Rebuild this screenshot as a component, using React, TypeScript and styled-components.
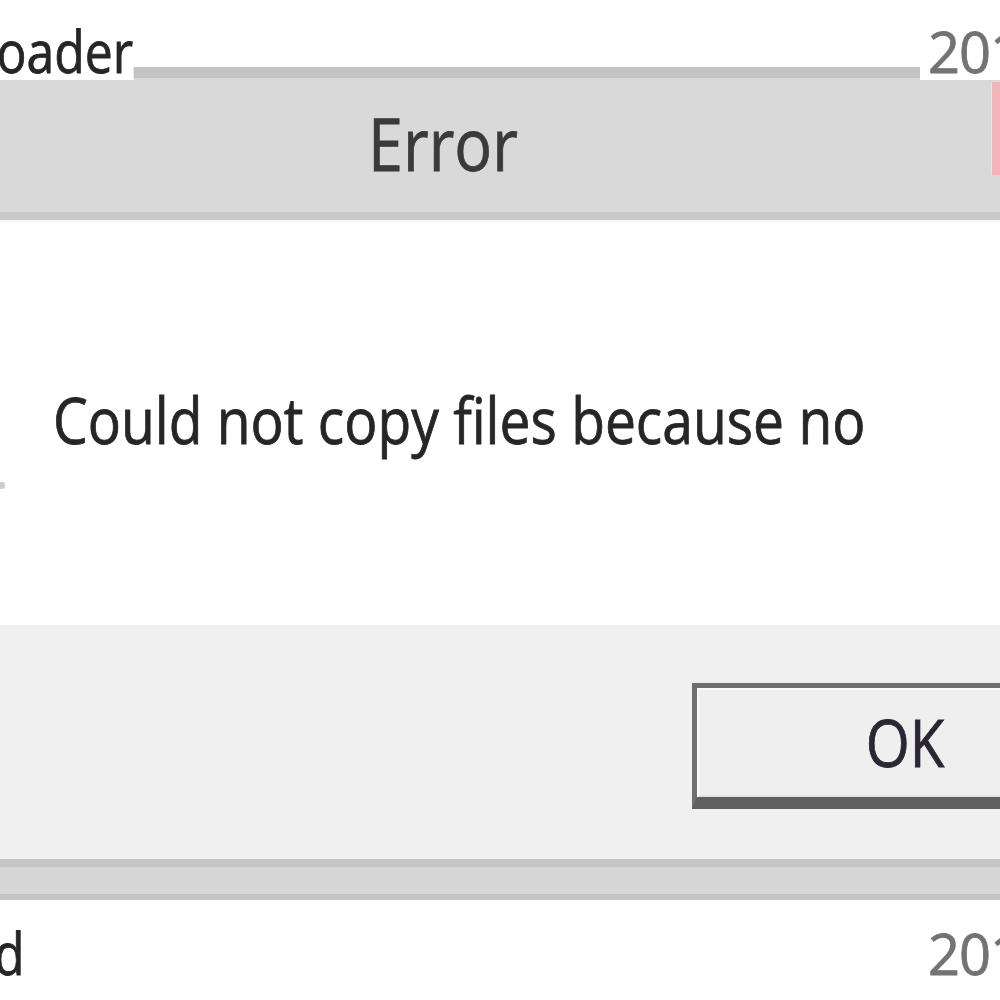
import React from "react";
import styled, { createGlobalStyle } from "styled-components";

const Global = createGlobalStyle`
  html, body { margin: 0; padding: 0; background: #ffffff; }
  * { box-sizing: border-box; }
`;

const FONT = `"Open Sans", "Noto Sans", "DejaVu Sans", sans-serif`;

const Page = styled.div`
  width: 1000px;
  height: 1000px;
  overflow: hidden;
  background: #ffffff;
  display: flex;
  flex-direction: column;
  font-family: ${FONT};
  font-weight: 400;
  -webkit-text-stroke: 0.8px currentColor;
`;

const ListRow = styled.div<{ $pad: number; $h: number; $front?: boolean }>`
  height: ${(p) => p.$h}px;
  padding-top: ${(p) => p.$pad}px;
  display: flex;
  justify-content: space-between;
  align-items: flex-start;
  flex-shrink: 0;
  position: relative;
  z-index: ${(p) => (p.$front ? 1 : 0)};
`;

const ListName = styled.div<{ $shift: number }>`
  height: 58px;
  font-size: 58px;
  line-height: 58px;
  color: #262626;
  background: #ffffff;
  margin-left: ${(p) => p.$shift}px;
  white-space: nowrap;
  transform: scaleX(0.86);
  transform-origin: left center;
`;

const ListDate = styled.div`
  height: 58px;
  padding-left: 8px;
  font-size: 56px;
  line-height: 58px;
  color: #737373;
  background: #ffffff;
  margin-right: -52px;
  white-space: nowrap;
  letter-spacing: -1px;
`;

const Dialog = styled.div`
  flex-shrink: 0;
  display: flex;
  flex-direction: column;
`;

const TitleBar = styled.div`
  height: 153px;
  background: #d9d9d9;
  border-top: 11px solid #c3c3c3;
  border-bottom: 8px solid #c9c9c9;
  display: flex;
  align-items: stretch;
`;

const Title = styled.div`
  flex: 1;
  padding-top: 28px;
  padding-left: 368px;
  font-size: 74px;
  line-height: 74px;
  color: #3a3a3a;
  white-space: nowrap;
`;

const Scaled = styled.span<{ $sx: number }>`
  display: inline-block;
  transform: scaleX(${(p) => p.$sx});
  transform-origin: left center;
`;

const CloseEdge = styled.div`
  width: 9px;
  margin: 4px 0 37px;
  background: #f5b3b9;
  border-left: 1px solid #dfe9ea;
`;

const Body = styled.div`
  height: 405px;
  background: #ffffff;
  border-top: 2px solid #f6f6f6;
  display: flex;
  align-items: flex-start;
  padding-top: 166px;
`;

const IconEdge = styled.div`
  width: 5px;
  height: 7px;
  margin-top: 94px;
  background: #c9ccd0;
  border-radius: 0 3px 3px 0;
`;

const Message = styled.div`
  margin-left: 48px;
  font-size: 64px;
  line-height: 64px;
  color: #262626;
  white-space: nowrap;
`;

const Footer = styled.div`
  height: 234px;
  background: #f0f0f0;
  padding-top: 58px;
  padding-left: 692px;
  display: flex;
  align-items: flex-start;
`;

const Button = styled.div`
  width: 426px;
  height: 126px;
  flex-shrink: 0;
  background: #efefef;
  border-style: solid;
  border-color: #6f6f6f;
  border-width: 5px 5px 12px 5px;
  border-bottom-color: #5f5f5f;
  box-shadow: inset 2px 2px 0 #fafafa, inset -2px -2px 0 #e2e2e2;
  display: flex;
  align-items: center;
  justify-content: center;
  font-size: 65px;
  line-height: 65px;
  color: #2a2633;
`;

const ButtonLabel = styled.span`
  display: inline-block;
  transform: scaleX(0.87);
`;

const FrameBottom = styled.div`
  height: 41px;
  background: #d6d6d6;
  border-top: 8px solid #c6c6c6;
  border-bottom: 6px solid #c4c4c4;
`;

export default function App() {
  return (
    <>
      <Global />
      <Page>
        <ListRow $h={67} $pad={22} $front>
          <ListName $shift={-16}>loader</ListName>
          <ListDate>2017</ListDate>
        </ListRow>
        <Dialog>
          <TitleBar>
            <Title>
              <Scaled $sx={0.85}>Error</Scaled>
            </Title>
            <CloseEdge />
          </TitleBar>
          <Body>
            <IconEdge />
            <Message>
              <Scaled $sx={0.862}>Could not copy files because no</Scaled>
            </Message>
          </Body>
          <Footer>
            <Button>
              <ButtonLabel>OK</ButtonLabel>
            </Button>
          </Footer>
          <FrameBottom />
        </Dialog>
        <ListRow $h={102} $pad={24}>
          <ListName $shift={-6}>d</ListName>
          <ListDate>2017</ListDate>
        </ListRow>
      </Page>
    </>
  );
}
